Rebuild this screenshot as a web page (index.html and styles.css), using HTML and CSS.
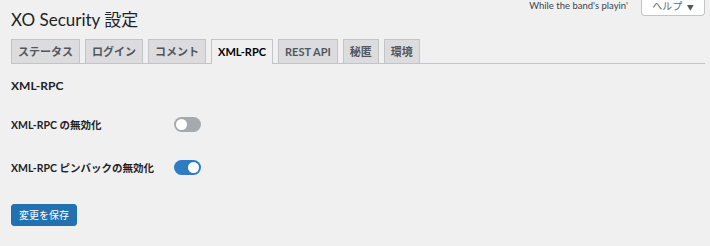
FILE: index.html
```html
<!DOCTYPE html>
<html lang="ja">
<head>
  <meta charset="UTF-8">
  <meta name="viewport" content="width=device-width, initial-scale=1.0">
  <title>XO Security 設定</title>
  <link rel="stylesheet" href="styles.css">
</head>
<body>
  <div class="wrap">
    <!-- Cabeçalho -->
    <div class="head">
      <h1>XO Security 設定</h1>
      <div class="meta">
        <p class="dolly">While the band's playin'</p>
        <button class="help">ヘルプ <span class="arrow">▼</span></button>
      </div>
    </div>
    <!-- Abas -->
    <nav class="tabs">
      <a class="tab">ステータス</a>
      <a class="tab">ログイン</a>
      <a class="tab">コメント</a>
      <a class="tab active">XML-RPC</a>
      <a class="tab">REST API</a>
      <a class="tab">秘匿</a>
      <a class="tab">環境</a>
    </nav>
    <h2>XML-RPC</h2>
    <div class="rows">
      <div class="row">
        <label>XML-RPC の無効化</label>
        <span class="toggle"></span>
      </div>
      <div class="row">
        <label>XML-RPC ピンバックの無効化</label>
        <span class="toggle on"></span>
      </div>
    </div>
    <button class="save">変更を保存</button>
  </div>
</body>
</html>
```

FILE: styles.css
```css
/* Estilo global */
body {
  margin: 0;
  padding: 0;
  background-color: #f0f0f1;
  color: #1d2327;
  font-family: Lato, "Noto Sans CJK JP", sans-serif;
}

.wrap {
  padding: 0 5px 0 11px;
}

.head {
  display: flex;
  justify-content: space-between;
  align-items: flex-start;
  height: 39px;
}

h1 {
  margin: 9px 0 0;
  font-size: 17px;
  font-weight: 400;
  line-height: 22px;
}

.meta {
  display: flex;
  align-items: flex-start;
  gap: 13px;
}

.dolly {
  margin: 0;
  font-size: 9.5px;
  line-height: 12px;
  color: #3c434a;
}

.help {
  width: 64px;
  height: 16px;
  padding: 0 0 2px;
  background: #fff;
  border: 1px solid #c3c4c7;
  border-top: 0;
  border-radius: 0 0 4px 4px;
  font-family: inherit;
  font-size: 10px;
  line-height: 13px;
  color: #646970;
}

.arrow {
  font-size: 7px;
  color: #50575e;
  margin-left: 2px;
}

/* Abas */
.tabs {
  display: flex;
  gap: 5px;
  border-bottom: 1px solid #c3c4c7;
}

.tab {
  padding: 3px 6px;
  border: 1px solid #c3c4c7;
  border-bottom: 0;
  background: #dcdcde;
  color: #50575e;
  font-size: 11px;
  font-weight: 700;
  line-height: 17px;
}

.tab.active {
  background: #f0f0f1;
  color: #000;
  margin-bottom: -1px;
  padding-bottom: 4px;
}

h2 {
  margin: 12px 0 0;
  font-size: 12px;
  font-weight: 700;
  line-height: 20px;
}

/* Linhas */
.rows {
  margin-top: 7px;
}

.row {
  display: grid;
  grid-template-columns: 163px auto;
  align-items: center;
  height: 43px;
}

.row label {
  font-size: 10.5px;
  font-weight: 700;
}

.toggle {
  position: relative;
  width: 27px;
  height: 15px;
  border-radius: 8px;
  background: #a7aaad;
}

.toggle::after {
  content: "";
  position: absolute;
  top: 2px;
  left: 2px;
  width: 11px;
  height: 11px;
  border-radius: 50%;
  background: #fff;
}

.toggle.on {
  background: #2f7bc6;
}

.toggle.on::after {
  left: 14px;
}

/* Botão */
.save {
  margin-top: 15px;
  height: 22px;
  padding: 0 7px;
  border: 1px solid #2271b1;
  border-radius: 3px;
  background: #2271b1;
  color: #fff;
  font-family: inherit;
  font-size: 10px;
  line-height: 20px;
}
```
